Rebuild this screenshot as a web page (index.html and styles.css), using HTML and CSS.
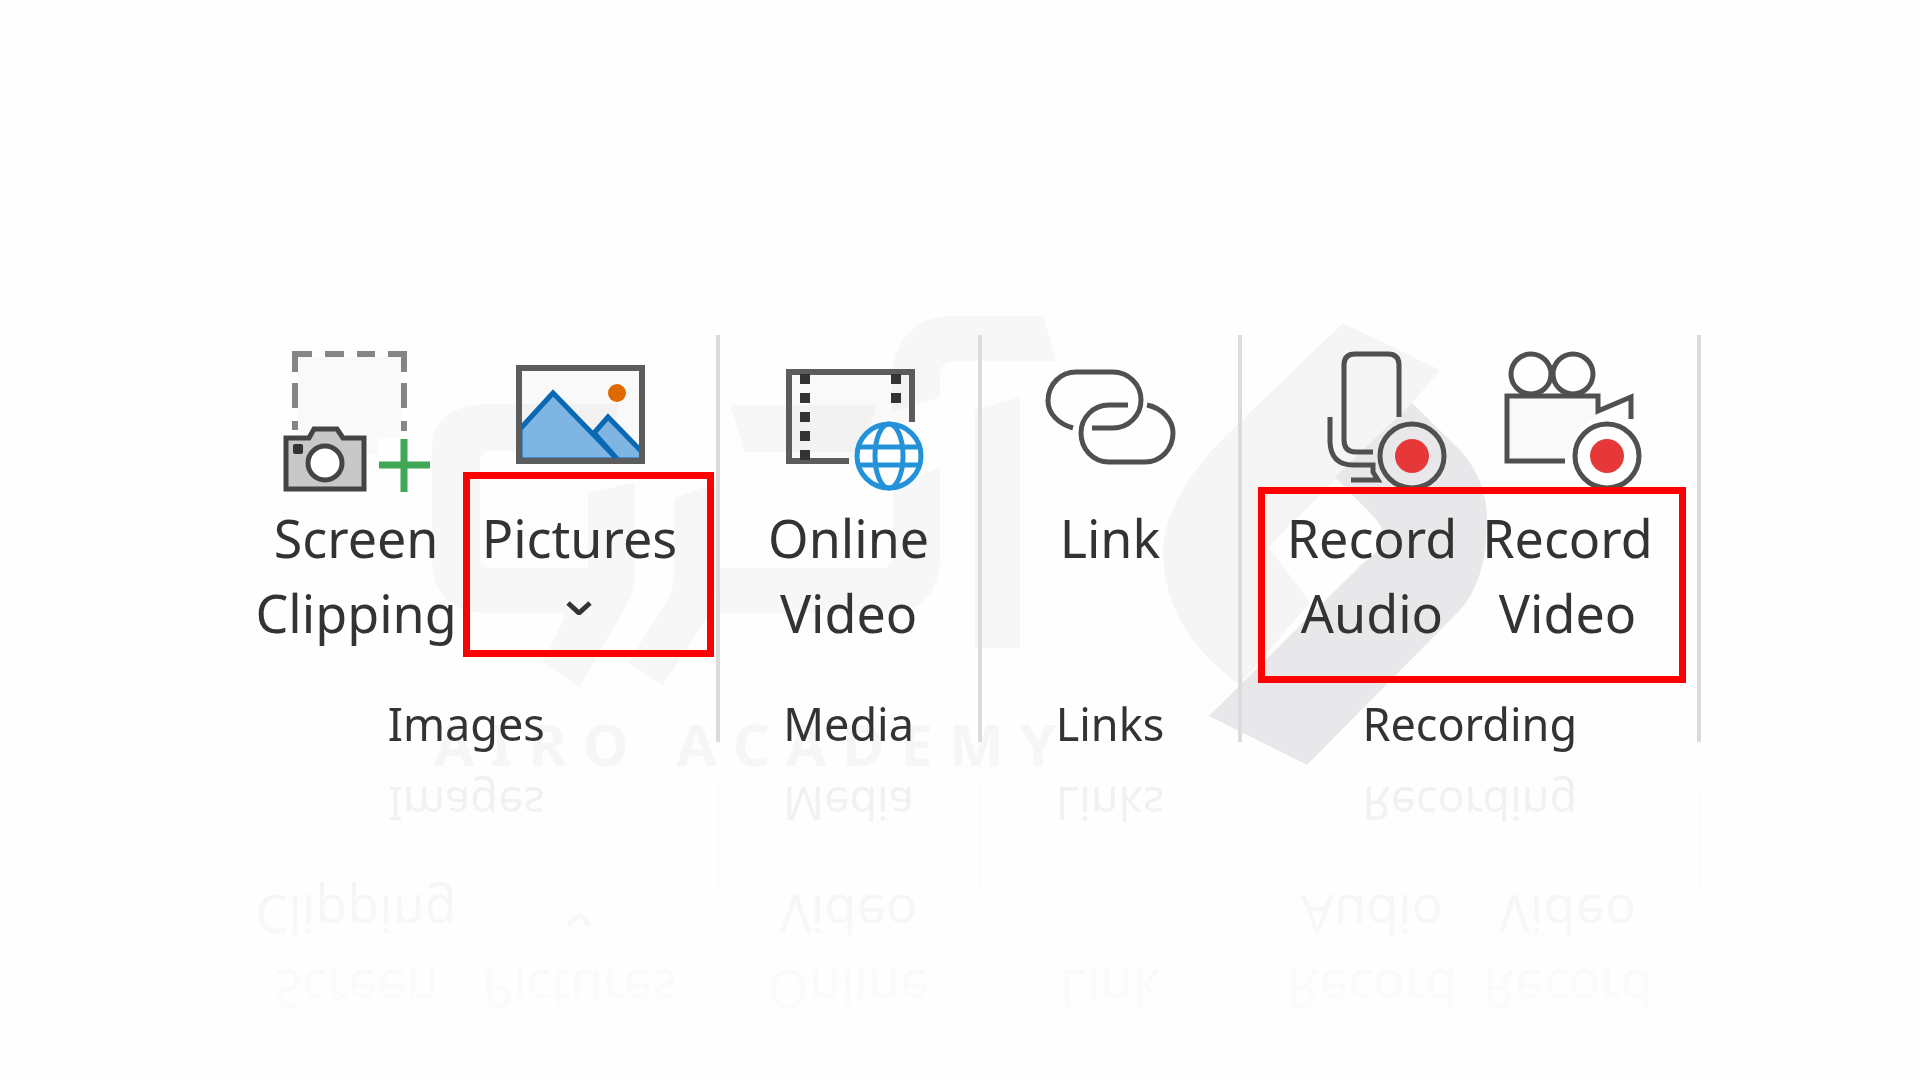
FILE: index.html
```html
<!DOCTYPE html>
<html lang="en">
<head>
    <meta charset="UTF-8">
    <title>Insert Ribbon</title>
    <meta name="viewport" content="width=device-width, initial-scale=1">
    <link rel="stylesheet" href="styles.css">
</head>
<body>
    <!-- Background logo -->
    <div class="watermark" aria-hidden="true">
        <svg class="watermark-logo" viewBox="0 0 1920 1080">
            <g class="mark-pale">
                <path d="M482 404 H620 L606 451 H492 Q480 451 480 463 V556 Q480 568 492 568 H588 V492 L635 483 V570 Q635 592 622 614 L579 687 L543 663 L566 613 H482 Q432 608 432 560 V450 Q432 408 482 404 Z"/>
                <path d="M674 498 L718 482 V570 Q718 592 706 620 L663 685 L628 663 L664 606 Q674 590 674 575 Z"/>
                <path d="M730 405 H877 L860 452 H745 Z"/>
                <path d="M720 568 H880 Q893 568 893 555 V485 L940 468 V560 Q938 608 892 613 H720 Z"/>
                <path d="M892 412 V370 Q900 318 950 316 H1043 L1056 361 H955 Q940 361 940 376 V397 Z"/>
                <path d="M975 410 L1020 397 V648 H975 Z"/>
            </g>
            <path class="mark-light" d="M1343 323 L1440 370 L1412 403 L1268 547 L1310 602 L1240 685 Q1163 630 1163 550 Q1166 490 1240 422 Z"/>
            <path class="mark-dark" d="M1412 403 L1460 450 Q1487 480 1487 520 Q1487 580 1460 610 L1307 765 L1209 716 L1363 563 Q1398 540 1372 515 L1335 477 Z"/>
        </svg>
        <div class="wordmark">
            <div class="word"><span>A</span><span>I</span><span>R</span><span>O</span></div>
            <div class="word"><span>A</span><span>C</span><span>A</span><span>D</span><span>E</span><span>M</span><span>Y</span></div>
        </div>
    </div>

    <main class="stage">
        <div class="ribbon">
            <section class="group">
                <div class="commands">
                    <button class="command">
                        <svg class="icon" viewBox="0 0 150 150">
                            <path class="tint" d="M17 12 H120 V92 H96 V110 H86 V90 H63 L56 81 H33 L27 90 H17 Z"/>
                            <path class="dash" d="M14 27 V9 H31 M44 9 H63 M76 9 H94 M107 9 H123 V27 M14 38 V63 M123 38 V63 M14 76 V85 M123 76 V86"/>
                            <path class="camera" d="M5 93 H28 L33 84 H56 L62 93 H83 V144 H5 Z"/>
                            <circle class="lens" cx="44" cy="118" r="17"/>
                            <rect class="dot" x="12" y="99" width="10" height="10" rx="2"/>
                            <path class="plus" d="M98 120 H149 M123 94 V147"/>
                        </svg>
                        <span class="caption">Screen<br>Clipping</span>
                    </button>
                    <button class="command">
                        <svg class="icon" viewBox="0 0 150 150">
                            <rect class="tint" x="15" y="23" width="123" height="93"/>
                            <path class="hill" d="M16 84 L49 48 L114 115 H16 Z"/>
                            <path class="hill" d="M90 88 L104 72 L138 107 V115 H114 Z"/>
                            <circle class="sun" cx="113" cy="48" r="9"/>
                            <rect class="line frame" x="15" y="23" width="123" height="93"/>
                        </svg>
                        <span class="caption">Pictures</span>
                        <svg class="chevron" viewBox="0 0 26 14"><path d="M2 2 L13 12 L24 2"/></svg>
                    </button>
                </div>
                <h2 class="group-name">Images</h2>
            </section>

            <section class="group">
                <div class="commands">
                    <button class="command">
                        <svg class="icon" viewBox="0 0 150 150">
                            <path class="tint" d="M15 27 H138 V77 Q90 75 78 116 H15 Z"/>
                            <path class="line frame" d="M138 77 V27 H15 V116 H75"/>
                            <path class="holes" d="M31 29 V115 M122 29 V60"/>
                            <g class="globe">
                                <circle cx="115" cy="111" r="32"/>
                                <ellipse cx="115" cy="111" rx="14" ry="32"/>
                                <path d="M84 102 H146 M84 120 H146"/>
                            </g>
                        </svg>
                        <span class="caption">Online<br>Video</span>
                    </button>
                </div>
                <h2 class="group-name">Media</h2>
            </section>

            <section class="group">
                <div class="commands">
                    <button class="command">
                        <svg class="icon" viewBox="0 0 150 150">
                            <path class="line" d="M38 83 C24 79 13 69 13 56 C13 39 26 27 41 27 H78 C93 27 106 39 106 55 C106 71 93 83 78 83 H57"/>
                            <path class="line" d="M93 60 H74 C58 60 46 73 46 88 C46 104 58 117 74 117 H110 C126 117 138 104 138 88 C138 75 127 63 112 60"/>
                        </svg>
                        <span class="caption">Link</span>
                    </button>
                </div>
                <h2 class="group-name">Links</h2>
            </section>

            <section class="group">
                <div class="commands">
                    <button class="command">
                        <svg class="icon" viewBox="0 0 150 150">
                            <path class="line" d="M102 72 V20 Q102 9 91 9 H58 Q47 9 47 20 V95 Q47 107 59 107 H76"/>
                            <path class="line" d="M33 72 V97 Q34 120 56 120 H76 V127 L81 135 H54"/>
                            <circle class="line" cx="115" cy="111" r="32"/>
                            <circle class="rec" cx="115" cy="111" r="17"/>
                        </svg>
                        <span class="caption">Record<br>Audio</span>
                    </button>
                    <button class="command">
                        <svg class="icon" viewBox="0 0 150 150">
                            <path class="tint" d="M15 51 H106 V72 Q80 82 76 116 H15 Z"/>
                            <circle class="line" cx="39" cy="29" r="20"/>
                            <circle class="line" cx="81" cy="29" r="20"/>
                            <path class="line" d="M73 116 H15 V51 H106 V66 L139 52 V74"/>
                            <circle class="line" cx="115" cy="111" r="32"/>
                            <circle class="rec" cx="115" cy="111" r="17"/>
                        </svg>
                        <span class="caption">Record<br>Video</span>
                    </button>
                </div>
                <h2 class="group-name">Recording</h2>
            </section>
        </div>

        <div class="highlight highlight-pictures"></div>
        <div class="highlight highlight-recording"></div>
    </main>
</body>
</html>
```
FILE: styles.css
```css
* {
    box-sizing: border-box;
}

body {
    position: relative;
    margin: 0;
    min-height: 100vh;
    padding-top: 335px;
    overflow: hidden;
    background-color: #fefefe;
    font-family: "Noto Sans", "Open Sans", sans-serif;
    color: #333;
}

/* Background logo */
.watermark {
    position: absolute;
    top: 0;
    left: 0;
    width: 100%;
}

.watermark-logo {
    display: block;
    width: 100%;
}

.mark-pale {
    fill: #f7f7f8;
}

.mark-light {
    fill: #f5f5f5;
}

.mark-dark {
    fill: #e8e8eb;
}

.wordmark {
    position: absolute;
    top: 704px;
    left: 22.6%;
    display: flex;
    gap: 48px;
    font-size: 58px;
    font-weight: 700;
    line-height: 80px;
    color: #f7f5f8;
}

.word {
    display: flex;
    gap: 16px;
}

/* Ribbon */
.stage {
    position: relative;
}

.ribbon {
    display: grid;
    grid-template-columns: 503fr 262fr 261fr 459fr;
    padding: 0 11.4% 22px 11.3%;
    -webkit-box-reflect: below 0 linear-gradient(transparent 30%, rgba(0, 0, 0, 0.07));
}

.group {
    display: flex;
    flex-direction: column;
    padding-top: 10px;
    border-right: 4px solid #dcdadc;
}

.commands {
    display: flex;
    justify-content: center;
    gap: 25px;
    margin-bottom: 56px;
}

.command {
    display: flex;
    flex-direction: column;
    align-items: center;
    padding: 0;
    border: none;
    background: none;
    font-family: inherit;
    font-size: 52px;
    line-height: 75px;
    color: inherit;
    cursor: pointer;
}

.caption {
    margin-top: 5px;
}

.group-name {
    margin: auto 0 0;
    font-size: 45px;
    font-weight: 400;
    line-height: 36px;
    text-align: center;
}

/* Icons */
.icon {
    width: 150px;
    height: 150px;
}

.tint {
    fill: rgba(0, 0, 0, 0.02);
}

.line {
    fill: none;
    stroke: #505050;
    stroke-width: 5;
}

.frame {
    stroke: #5c5c5c;
    stroke-width: 6;
}

.dash {
    fill: none;
    stroke: #858585;
    stroke-width: 6;
}

.camera {
    fill: #c8c8c8;
    stroke: #444;
    stroke-width: 5;
}

.lens {
    fill: #fff;
    stroke: #444;
    stroke-width: 5;
}

.dot {
    fill: #333;
}

.plus {
    stroke: #3fa856;
    stroke-width: 7;
}

.hill {
    fill: #7fb5e3;
    stroke: #0b68b3;
    stroke-width: 5;
}

.sun {
    fill: #e06800;
}

.holes {
    fill: none;
    stroke: #333;
    stroke-width: 10;
    stroke-dasharray: 10 9;
}

.globe {
    fill: none;
    stroke: #2492d8;
    stroke-width: 5;
}

.rec {
    fill: #e63838;
}

.chevron {
    width: 26px;
    height: 14px;
    margin-top: 26px;
    fill: none;
    stroke: #333;
    stroke-width: 5;
}

/* Red callouts over the ribbon */
.highlight {
    position: absolute;
    border: 7px solid #f00;
    pointer-events: none;
}

.highlight-pictures {
    top: 137px;
    left: 24.1%;
    width: 13.1%;
    height: 185px;
}

.highlight-recording {
    top: 152px;
    left: 65.5%;
    width: 22.3%;
    height: 196px;
}
```
